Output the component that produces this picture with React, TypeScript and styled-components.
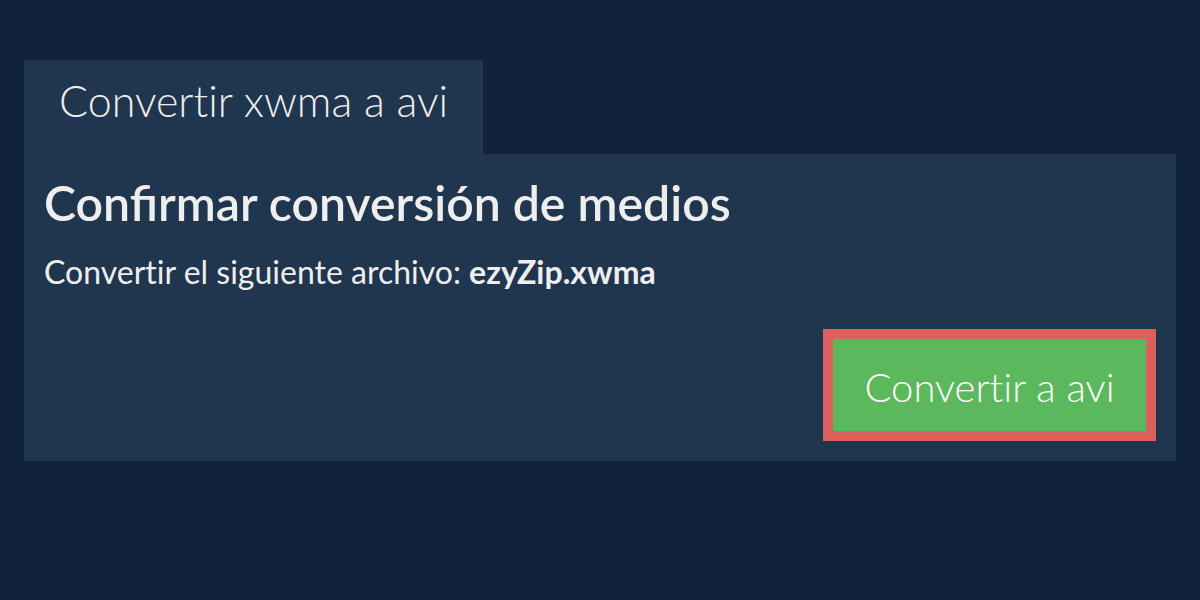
import React from "react";
import styled, { createGlobalStyle } from "styled-components";

const Global = createGlobalStyle`
  html, body { margin: 0; padding: 0; background: #10233a; }
  body { font-family: Lato, "Open Sans", sans-serif; color: #eeeeee; }
`;

const Page = styled.div`
  width: 1200px;
  height: 600px;
  box-sizing: border-box;
  padding: 60px 24px 0;
  display: flex;
  flex-direction: column;
  align-items: flex-start;
`;

const Tab = styled.div`
  background: #20354e;
  height: 94px;
  box-sizing: border-box;
  padding: 15px 35px 0;
  font-size: 43px;
  line-height: 1.2;
  font-weight: 300;
  color: #eeeeee;
  font-variant-ligatures: no-common-ligatures no-contextual;
  font-feature-settings: "liga" 0, "clig" 0, "calt" 0, "dlig" 0;
`;

const Panel = styled.section`
  align-self: stretch;
  background: #20354e;
  box-sizing: border-box;
  padding: 20px;
  display: flex;
  flex-direction: column;
`;

const Heading = styled.h1`
  margin: 0;
  font-size: 48.2px;
  font-weight: 600;
  line-height: 1.2;
`;

const Line = styled.p`
  margin: 21px 0 0;
  font-size: 32px;
  font-weight: 400;
  line-height: 1.2;
  font-variant-ligatures: no-common-ligatures no-contextual;
  font-feature-settings: "liga" 0, "clig" 0, "calt" 0, "dlig" 0;
`;

const Strong = styled.strong`
  font-weight: 700;
`;

const Actions = styled.div`
  display: flex;
  justify-content: flex-end;
  margin-top: 38px;
`;

const Button = styled.button`
  background: #5cb85c;
  border: 10px solid #dc605c;
  color: #ffffff;
  font-family: inherit;
  font-size: 40px;
  line-height: 1.2;
  font-weight: 300;
  font-variant-ligatures: no-common-ligatures no-contextual;
  font-feature-settings: "liga" 0, "clig" 0, "calt" 0, "dlig" 0;
  width: 333px;
  height: 112px;
  box-sizing: border-box;
  padding: 4px 0 0;
  cursor: pointer;
`;

export default function App() {
  return (
    <>
      <Global />
      <Page>
        <Tab>Convertir xwma a avi</Tab>
        <Panel>
          <Heading>Confirmar conversión de medios</Heading>
          <Line>
            Convertir el siguiente archivo: <Strong>ezyZip.xwma</Strong>
          </Line>
          <Actions>
            <Button>Convertir a avi</Button>
          </Actions>
        </Panel>
      </Page>
    </>
  );
}
